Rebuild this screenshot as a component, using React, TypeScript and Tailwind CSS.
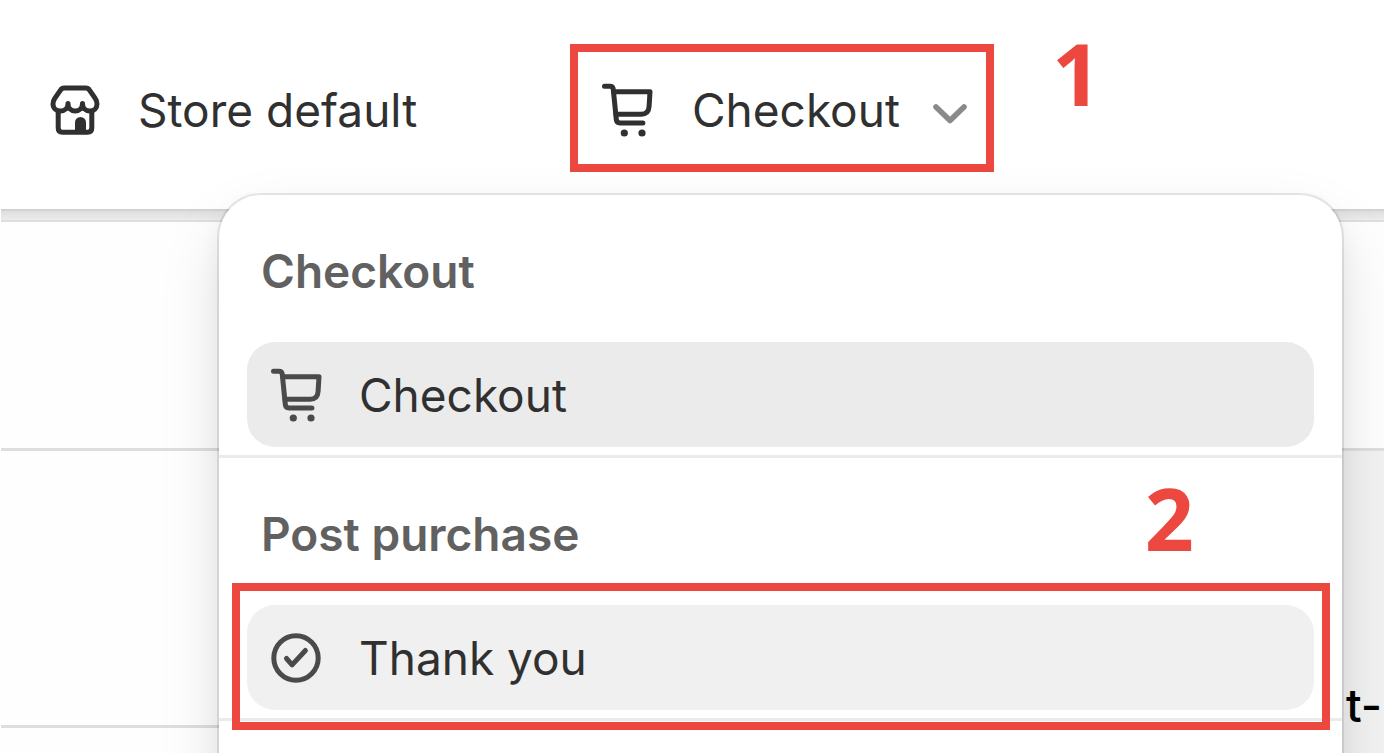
import type { ReactNode } from "react";

type MenuSectionProps = {
  title: string;
  children: ReactNode;
};

type MenuItemProps = {
  icon: ReactNode;
  label: string;
  className: string;
};

function StoreIcon() {
  return (
    <svg className="h-[50px] w-[50px] shrink-0" viewBox="0 0 50 50" fill="none" aria-hidden="true">
      <path
        d="M3 19c0-2 .5-3.800 1.600-5.300l5.900-8.600c.9-1.400 2.100-2.100 3.800-2.100h21.400c1.700 0 2.900.7 3.800 2.100l5.900 8.600C46.500 15.200 47 17 47 19c0 4.200-3.100 7-7.200 7s-7.300-2.800-7.300-7.500c0 4.700-3.200 7.500-7.300 7.500s-7.200-2.800-7.200-7.500c0 4.700-3.400 7.500-7.500 7.500S3 23.200 3 19Z"
        stroke="currentColor"
        strokeWidth="5"
        strokeLinejoin="round"
      />
      <path
        d="M8.200 25v18c0 2.700 1.500 4.200 4.200 4.200h25.200c2.700 0 4.200-1.500 4.200-4.200V25"
        stroke="currentColor"
        strokeWidth="5"
      />
      <path d="M25 37.500a5.500 5.500 0 0 1 11 0V47H25Z" fill="currentColor" />
    </svg>
  );
}

function CartIcon() {
  return (
    <svg className="h-[54px] w-[52px] shrink-0" viewBox="0 0 52 54" fill="none" aria-hidden="true">
      <g stroke="currentColor" strokeWidth="5" strokeLinecap="round" strokeLinejoin="round">
        <path d="M2.500 3.300h5.300c2 0 3.300 1.200 3.500 3.100l3 30.200c.2 2.200 1.500 3.400 3.600 3.400h23" />
        <path d="M11.500 8.700H48l-.9 14.600c-.3 4.900-3 7.900-7.900 7.900H14" />
      </g>
      <circle cx="22.300" cy="50" r="3.600" fill="currentColor" />
      <circle cx="40" cy="50" r="3.600" fill="currentColor" />
    </svg>
  );
}

function CheckCircleIcon() {
  return (
    <svg className="h-[50px] w-[52px] shrink-0" viewBox="0 0 52 50" fill="none" aria-hidden="true">
      <circle cx="25" cy="25" r="22.200" stroke="currentColor" strokeWidth="5" />
      <path
        d="m15.500 25.500 5.600 6.400L34.400 17.500"
        stroke="currentColor"
        strokeWidth="5"
        strokeLinecap="round"
        strokeLinejoin="round"
      />
    </svg>
  );
}

function ChevronIcon() {
  return (
    <svg className="h-5 w-[34px] shrink-0" viewBox="0 0 34 20" fill="none" aria-hidden="true">
      <path
        d="m3 3 14 13.500L31 3"
        stroke="#8a8a8a"
        strokeWidth="5.600"
        strokeLinecap="round"
        strokeLinejoin="round"
      />
    </svg>
  );
}

function MenuSection({ title, children }: MenuSectionProps) {
  return (
    <section className="relative border-b-[3px] border-[#ebebeb] px-7 pb-2">
      <h2 className="px-3.5 pt-12 pb-[43px] leading-[56px] font-semibold text-[#616161]">
        {title}
      </h2>
      {children}
    </section>
  );
}

function MenuItem({ icon, label, className }: MenuItemProps) {
  return (
    <button
      type="button"
      className={`flex h-[105px] w-full items-center gap-9 rounded-[28px] px-6 text-left ${className}`}
    >
      <span className="text-[#4a4a4a]">{icon}</span>
      <span>{label}</span>
    </button>
  );
}

export default function App() {
  return (
    <div className="flex min-h-screen flex-col bg-white pr-2 pb-[3px] pl-px font-['Inter','Liberation_Sans',sans-serif] text-[46px] leading-[56px] text-[#303030]">
      <div className="relative flex flex-1 flex-col overflow-hidden">
        <header className="flex items-start pt-11 pb-[37px]">
          <nav className="flex h-32 w-[569px] shrink-0 items-center pt-1 pl-[49px]">
            <a href="#store" className="flex items-center gap-[38px]">
              <StoreIcon />
              <span className="whitespace-nowrap">Store default</span>
            </a>
          </nav>
          <div className="h-32 shrink-0 border-8 border-[#ec4840]">
            <button type="button" aria-expanded="true" className="flex h-full items-center gap-[33px] pt-1 pr-[19px] pl-6">
              <span className="flex items-center gap-[38px]">
                <CartIcon />
                <span>Checkout</span>
              </span>
              <span className="pt-2">
                <ChevronIcon />
              </span>
            </button>
          </div>
          <span className="-mt-0.5 ml-[58px] font-['Open_Sans',sans-serif] text-[86px] leading-[62px] font-bold text-[#ec4840]">
            1
          </span>
        </header>

        <div className="h-[13px] border-t-2 border-b-2 border-t-[#d2d2d2] border-b-[#dedede] bg-linear-to-b from-[#dedede] to-[#ececec]" />

        <main className="flex flex-1 flex-col bg-[#fefefe]">
          <div className="h-[229px] border-b-[3px] border-[#dedede]" />
          <div className="flex flex-1">
            <div className="flex-1">
              <div className="h-[277px] border-b-[3px] border-[#dedede]" />
            </div>
            <div className="w-[42px] overflow-hidden bg-[#f2f2f2] pt-[226px] pl-1 font-medium whitespace-nowrap text-black">
              t-
            </div>
          </div>
        </main>

        <div className="absolute top-[195px] right-[42px] bottom-0 left-[218px]">
          <div className="-mb-20 h-[calc(100%+80px)] rounded-t-[42px] bg-white shadow-[0_0_0_2px_rgba(0,0,0,0.09),0_28px_70px_-8px_rgba(0,0,0,0.14),0_12px_24px_rgba(0,0,0,0.06)]">
            <MenuSection title="Checkout">
              <MenuItem icon={<CartIcon />} label="Checkout" className="bg-[#ebebeb]" />
            </MenuSection>
            <MenuSection title="Post purchase">
              <MenuItem icon={<CheckCircleIcon />} label="Thank you" className="bg-[#f0f0f0]" />
              <div className="pointer-events-none absolute top-[125px] right-3 -bottom-3 left-[13px] border-8 border-[#ec4840]" />
              <span className="absolute top-[29px] right-[148px] font-['Open_Sans',sans-serif] text-[86px] leading-[62px] font-bold text-[#ec4840]">
                2
              </span>
            </MenuSection>
          </div>
        </div>
      </div>
    </div>
  );
}
